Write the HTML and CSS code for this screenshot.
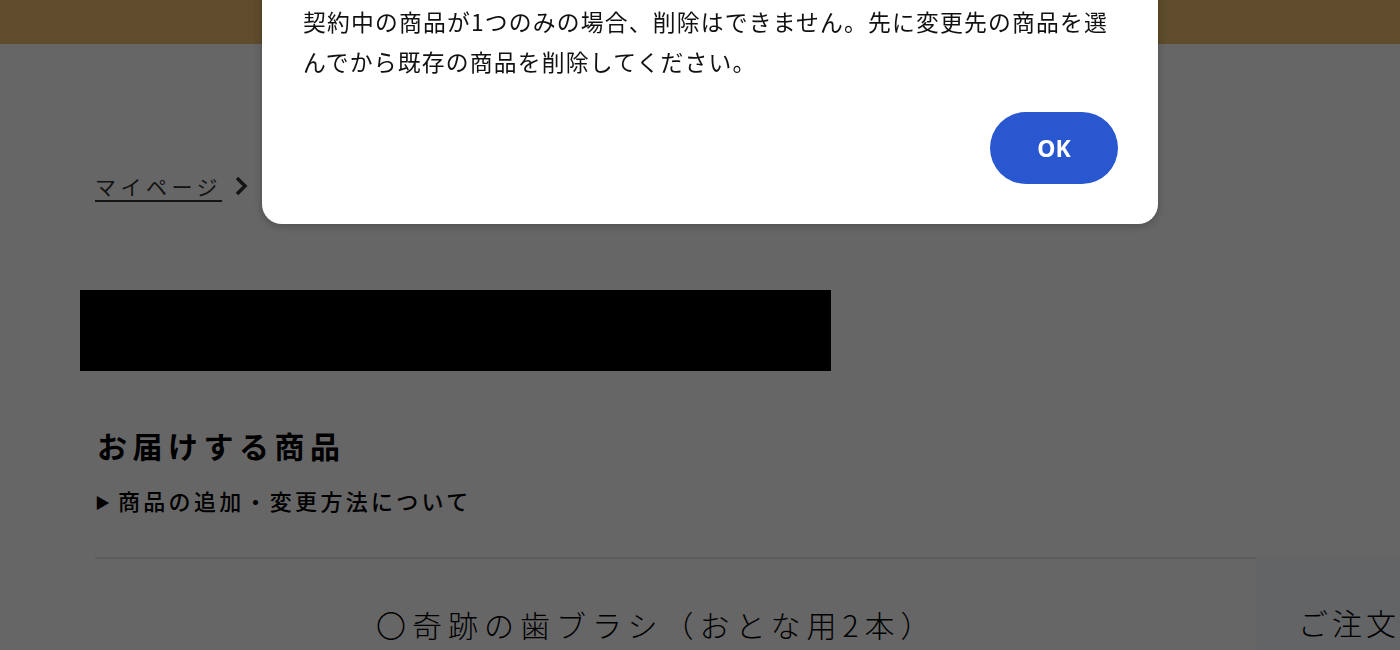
FILE: index.html
```html
<!DOCTYPE html>
<html lang="ja">
<head>
    <meta charset="UTF-8">
    <meta name="viewport" content="width=device-width, initial-scale=1.0">
    <title>お届けする商品</title>
    <link rel="stylesheet" href="styles.css">
</head>
<body>
    <header class="site-header"></header>

    <main class="container">
        <!-- パンくず -->
        <nav class="breadcrumb">
            <a href="#">マイページ</a>
            <svg class="chevron" width="14" height="22" viewBox="0 0 14 22">
                <path d="M3 3 L11 11 L3 19" fill="none" stroke="#333" stroke-width="3.5"/>
            </svg>
        </nav>

        <div class="masked"></div>

        <h2 class="section-title">お届けする商品</h2>
        <p class="how-to"><span class="arrow">▶</span>商品の追加・変更方法について</p>

        <div class="product-row">
            <div class="product-name">〇奇跡の歯ブラシ（おとな用2本）</div>
            <div class="product-order">ご注文</div>
        </div>
    </main>

    <!-- 確認ダイアログ -->
    <div class="overlay">
        <div class="dialog">
            <p class="dialog-text">契約中の商品が1つのみの場合、削除はできません。先に変更先の商品を選んでから既存の商品を削除してください。</p>
            <div class="dialog-actions">
                <button class="btn-ok">OK</button>
            </div>
        </div>
    </div>
</body>
</html>
```

FILE: styles.css
```css
body {
    margin: 0;
    font-family: "Noto Sans CJK JP", "Noto Sans", sans-serif;
    background: #fff;
    color: #000;
    overflow: hidden;
}

.site-header {
    height: 44px;
    background: #edbe6e;
}

.container {
    padding: 127px 0 0 80px;
}

.breadcrumb {
    display: flex;
    align-items: center;
    gap: 12px;
    padding-left: 15px;
    height: 30px;
    font-size: 21px;
    letter-spacing: 4.5px;
}

.breadcrumb a {
    color: #333;
    text-decoration: underline;
    text-underline-offset: 5px;
    text-decoration-thickness: 1.5px;
}

.masked {
    width: 751px;
    height: 81px;
    margin-top: 89px;
    background: #000;
}

.section-title {
    margin: 54px 0 0 17px;
    font-size: 30px;
    line-height: 40px;
    font-weight: 700;
    letter-spacing: 5.5px;
}

.how-to {
    margin: 20px 0 0 15px;
    font-size: 22px;
    line-height: 30px;
    font-weight: 500;
    letter-spacing: 3.3px;
}

.how-to .arrow {
    font-size: 15px;
    margin-right: 8px;
    letter-spacing: 0;
    vertical-align: 2px;
}

.product-row {
    display: flex;
    margin: 40px 0 0 15px;
}

.product-name {
    width: 1160px;
    border-top: 2px solid #e6e6e6;
    padding: 45px 0 0 281px;
    box-sizing: border-box;
    font-size: 30px;
    line-height: 40px;
    letter-spacing: 6px;
    font-weight: 300;
    height: 120px;
}

.product-order {
    flex: 1;
    background: #f7fafe;
    padding: 45px 0 0 43px;
    font-size: 30px;
    line-height: 40px;
    letter-spacing: 4px;
    font-weight: 300;
    white-space: nowrap;
}

/* ダイアログ */
.overlay {
    position: fixed;
    inset: 0;
    background: rgba(0, 0, 0, 0.6);
}

.dialog {
    position: absolute;
    left: 262px;
    top: -38px;
    width: 896px;
    box-sizing: border-box;
    padding: 40px 40px 40px 41px;
    background: #fff;
    border-radius: 20px;
    box-shadow: 0 2px 10px rgba(0, 0, 0, 0.25);
}

.dialog-text {
    margin: 0;
    font-size: 22.8px;
    line-height: 40px;
    letter-spacing: 1.2px;
    color: #111;
}

.dialog-actions {
    display: flex;
    justify-content: flex-end;
    margin-top: 30px;
}

.btn-ok {
    width: 128px;
    height: 72px;
    border: none;
    border-radius: 36px;
    background: #2857d0;
    color: #fff;
    font-family: "Noto Sans", sans-serif;
    font-size: 23px;
    font-weight: 700;
    cursor: pointer;
}
```
